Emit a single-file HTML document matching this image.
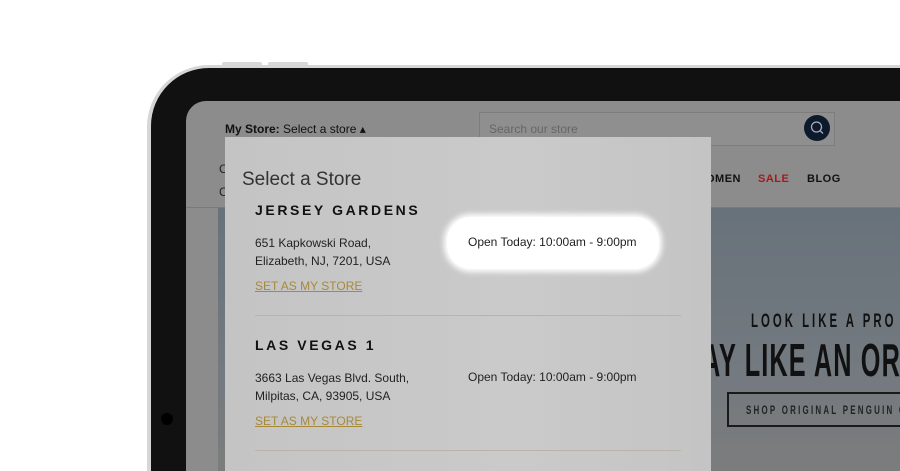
<!DOCTYPE html>
<html style="width:900px;height:471px;overflow:hidden"><head><style>
*{margin:0;padding:0;box-sizing:border-box}
html,body{width:900px;height:471px;overflow:hidden}
body{background:#fff;position:relative;font-family:"Liberation Sans",sans-serif}
.abs{position:absolute}
.t{white-space:nowrap}
</style></head><body>
<div class="abs" style="left:222px;top:62px;width:40px;height:4px;background:#d8d8d8;border-radius:2px"></div>
<div class="abs" style="left:268px;top:62px;width:40px;height:4px;background:#d8d8d8;border-radius:2px"></div>
<div class="abs" style="left:147px;top:65px;width:753px;height:406px;border-radius:62px 0 0 0;background:#d6d6d6"></div>
<div class="abs" style="left:151px;top:68px;width:749px;height:403px;border-radius:58px 0 0 0;background:#111"></div>
<div class="abs" style="left:161px;top:413px;width:12px;height:12px;border-radius:6px;background:#000"></div>
<div class="abs" style="left:186px;top:101px;width:714px;height:370px;border-radius:20px 0 0 0;background:#8c8c8c;overflow:hidden">
  <div class="abs" style="left:0;top:106px;width:714px;height:1px;background:#7a7a7a"></div>
  <div class="abs" style="left:32px;top:107px;width:700px;height:270px;background:linear-gradient(#68727a,#737a80 60%,#7c7c7c)"></div>
  <div class="abs t" style="left:39px;top:21px;font-size:12px;color:#111"><b>My Store:</b> Select a store ▴</div>
  <div class="abs" style="left:293px;top:11px;width:356px;height:34px;border:1px solid #7d7d7d;background:#8f8f8f"></div>
  <div class="abs t" style="left:303px;top:21px;font-size:12px;color:#666">Search our store</div>
  <div class="abs" style="left:618px;top:14px;width:26px;height:26px;border-radius:13px;background:#0c1a2c">
    <svg width="26" height="26"><circle cx="12.5" cy="12" r="5" fill="none" stroke="#aab" stroke-width="1.3"/><line x1="16" y1="15.5" x2="19" y2="18.5" stroke="#aab" stroke-width="1.3"/></svg></div>
  <div class="abs t" style="left:33px;top:61px;font-size:12px;color:#222">C</div>
  <div class="abs t" style="left:33px;top:84px;font-size:12px;color:#222">C</div>
  <div class="abs t" style="left:520px;top:72px;font-size:11px;font-weight:bold;color:#111;letter-spacing:.5px">OMEN</div>
  <div class="abs t" style="left:572px;top:72px;font-size:11px;font-weight:bold;color:#a01c1c;letter-spacing:.5px">SALE</div>
  <div class="abs t" style="left:621px;top:72px;font-size:11px;font-weight:bold;color:#111;letter-spacing:.5px">BLOG</div>
  <div class="abs t" style="left:565px;top:210px;font-size:19px;font-weight:bold;color:#111;letter-spacing:5px;transform:scaleX(.6);transform-origin:left">LOOK LIKE A PRO</div>
  <div class="abs t" style="left:516px;top:232px;font-size:46px;font-weight:bold;color:#111;letter-spacing:2px;transform:scaleX(.55);transform-origin:left">AY LIKE AN ORIGINAL</div>
  <div class="abs" style="left:541px;top:291px;width:250px;height:35px;border:2px solid #1a1a1a"></div>
  <div class="abs t" style="left:560px;top:302px;font-size:12px;font-weight:bold;color:#222;letter-spacing:3.4px;transform:scaleX(.66);transform-origin:left">SHOP ORIGINAL PENGUIN GOLF</div>
</div>
<div class="abs" style="left:225px;top:137px;width:486px;height:334px;background:linear-gradient(90deg,#c4c4c4,#cacaca 60%,#c4c4c4)">
  <div class="abs t" style="left:17px;top:32px;font-size:19px;color:#333">Select a Store</div>
  <div class="abs t" style="left:30px;top:65px;font-size:14px;font-weight:bold;color:#111;letter-spacing:2.6px">JERSEY GARDENS</div>
  <div class="abs" style="left:30px;top:97px;font-size:12px;line-height:18px;color:#222">651 Kapkowski Road,<br>Elizabeth, NJ, 7201, USA</div>
  <div class="abs" style="left:222px;top:80px;width:212px;height:52px;border-radius:24px;background:#fff;box-shadow:0 0 6px 3px #fff"></div>
  <div class="abs t" style="left:243px;top:98px;font-size:12px;color:#222">Open Today: 10:00am - 9:00pm</div>
  <div class="abs t" style="left:30px;top:142px;font-size:12px;color:#a8893a;text-decoration:underline">SET AS MY STORE</div>
  <div class="abs" style="left:30px;top:178px;width:426px;height:1px;background:#b8b5a8"></div>
  <div class="abs t" style="left:30px;top:200px;font-size:14px;font-weight:bold;color:#111;letter-spacing:2.6px">LAS VEGAS 1</div>
  <div class="abs" style="left:30px;top:232px;font-size:12px;line-height:18px;color:#222">3663 Las Vegas Blvd. South,<br>Milpitas, CA, 93905, USA</div>
  <div class="abs t" style="left:243px;top:233px;font-size:12px;color:#222">Open Today: 10:00am - 9:00pm</div>
  <div class="abs t" style="left:30px;top:277px;font-size:12px;color:#a8893a;text-decoration:underline">SET AS MY STORE</div>
  <div class="abs" style="left:30px;top:313px;width:426px;height:1px;background:#b8b5a8"></div>
</div>
</body></html>
